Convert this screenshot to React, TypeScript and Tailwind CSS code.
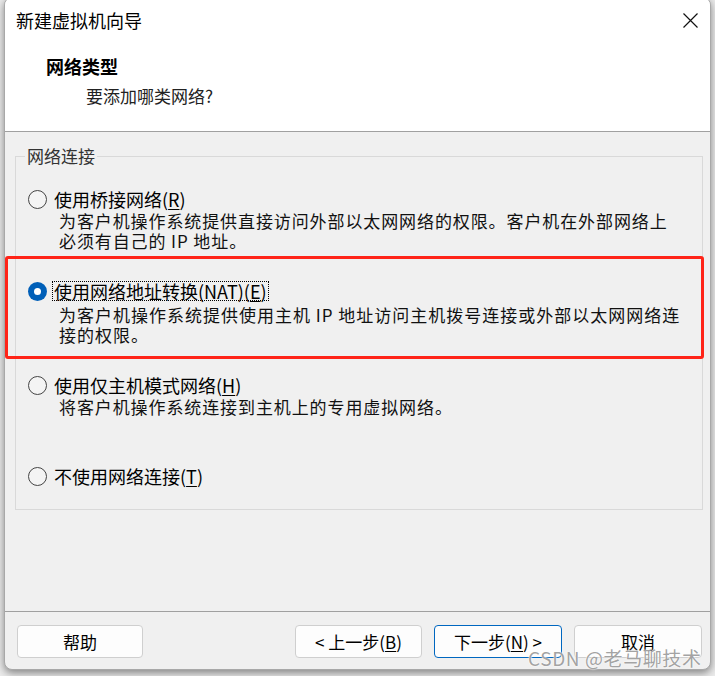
import React from 'react';

const Radio: React.FC<{ checked?: boolean }> = ({ checked }) =>
  checked ? (
    <span className="w-[19px] h-[19px] rounded-full bg-[#005fb8] flex items-center justify-center shrink-0">
      <span className="w-[7px] h-[7px] rounded-full bg-white" />
    </span>
  ) : (
    <span className="w-[19px] h-[19px] rounded-full border-[1.5px] border-[#444] bg-[#f4f4f4] shrink-0" />
  );

const Key: React.FC<{ k: string }> = ({ k }) => (
  <>
    (<span className="underline underline-offset-[2px]">{k}</span>)
  </>
);

const App: React.FC = () => {
  return (
    <div className="w-[715px] h-[676px] bg-[#ececec] overflow-hidden relative font-['Noto_Sans_CJK_SC',sans-serif] text-black">
      <div className="ml-[4px] -mt-[3px] w-[707px] h-[673px] rounded-[8px] border border-[#a8a8a8] bg-[#f0f0f0] overflow-hidden flex flex-col shadow-[0_3px_8px_rgba(0,0,0,0.45)]">
        {/* Header */}
        <div className="h-[134px] bg-white border-b border-[#a0a0a0] shrink-0">
          <div className="flex items-center justify-between pt-[10px] pl-[11px] pr-[12px] h-[34px]">
            <span className="text-[18px] leading-[24px]">新建虚拟机向导</span>
            <svg width="15" height="15" viewBox="0 0 15 15">
              <path d="M0.5 0.5 L14.5 14.5 M14.5 0.5 L0.5 14.5" stroke="#111" strokeWidth="1.2" fill="none" />
            </svg>
          </div>
          <div className="mt-[22px] pl-[41px] text-[18px] leading-[24px] font-bold">网络类型</div>
          <div className="mt-[6px] pl-[81px] text-[17px] leading-[24px] text-[#222]">要添加哪类网络?</div>
        </div>

        {/* Body */}
        <div className="flex-1">
          <fieldset className="mt-[14px] ml-[10px] w-[688px] h-[364px] border border-[#d9d9d9] pl-[12px]">
            <legend className="ml-[-3px] px-[2px] text-[17px] leading-[20px] text-[#333]">网络连接</legend>

            <div className="mt-[21px]">
              <div className="flex items-center h-[24px]">
                <Radio />
                <span className="ml-[7px] text-[18px] leading-[24px]">使用桥接网络<Key k="R" /></span>
              </div>
              <div className="pl-[31px] text-[17px] leading-[20px] text-[#111] whitespace-nowrap tracking-[0.9px]">
                <div>为客户机操作系统提供直接访问外部以太网网络的权限。客户机在外部网络上</div>
                <div>必须有自己的 IP 地址。</div>
              </div>
            </div>

            <div className="mt-[28px]">
              <div className="flex items-center h-[24px]">
                <Radio checked />
                <span className="ml-[5px] px-[1px] border border-dotted border-black text-[18px] leading-[18px]">
                  使用网络地址转换(NAT)<Key k="E" />
                </span>
              </div>
              <div className="pl-[31px] mt-[2px] text-[17px] leading-[20px] text-[#111] whitespace-nowrap tracking-[1px]">
                <div>为客户机操作系统提供使用主机 IP 地址访问主机拨号连接或外部以太网网络连</div>
                <div>接的权限。</div>
              </div>
            </div>

            <div className="mt-[28px]">
              <div className="flex items-center h-[24px]">
                <Radio />
                <span className="ml-[7px] text-[18px] leading-[24px]">使用仅主机模式网络<Key k="H" /></span>
              </div>
              <div className="pl-[31px] text-[17px] leading-[20px] text-[#111] whitespace-nowrap tracking-[0.9px]">
                <div>将客户机操作系统连接到主机上的专用虚拟网络。</div>
              </div>
            </div>

            <div className="mt-[47px]">
              <div className="flex items-center h-[24px]">
                <Radio />
                <span className="ml-[7px] text-[18px] leading-[24px]">不使用网络连接<Key k="T" /></span>
              </div>
            </div>
          </fieldset>
        </div>

        {/* Footer */}
        <div className="h-[58px] shrink-0 border-t border-[#a0a0a0] pt-[13px] pl-[12px] pr-[8px] flex justify-between">
          <button className="w-[126px] h-[33px] rounded-[4px] border border-[#cfcfcf] bg-[#fdfdfd] text-[17px]">帮助</button>
          <div className="flex gap-[12px]">
            <button className="w-[127px] h-[33px] rounded-[4px] border border-[#cfcfcf] bg-[#fdfdfd] text-[17px]">
              &lt; 上一步<Key k="B" />
            </button>
            <button className="w-[128px] h-[33px] rounded-[4px] border border-[#0067c0] bg-[#fdfdfd] text-[17px]">
              下一步<Key k="N" /> &gt;
            </button>
            <button className="w-[128px] h-[33px] rounded-[4px] border border-[#cfcfcf] bg-[#fdfdfd] text-[17px]">取消</button>
          </div>
        </div>
      </div>

      {/* annotation */}
      <div className="absolute left-[5px] top-[256px] w-[699px] h-[103px] border-[3px] border-[#ff2418] rounded-[3px]" />

      {/* watermark */}
      <div className="absolute left-[528px] top-[646px] text-[19px] leading-[24px] tracking-[0.6px] text-[#8a8a8a]/80 [text-shadow:0_0_2px_#fff,0_0_1px_#fff]">
        CSDN @老马聊技术
      </div>
    </div>
  );
};

export default App;
